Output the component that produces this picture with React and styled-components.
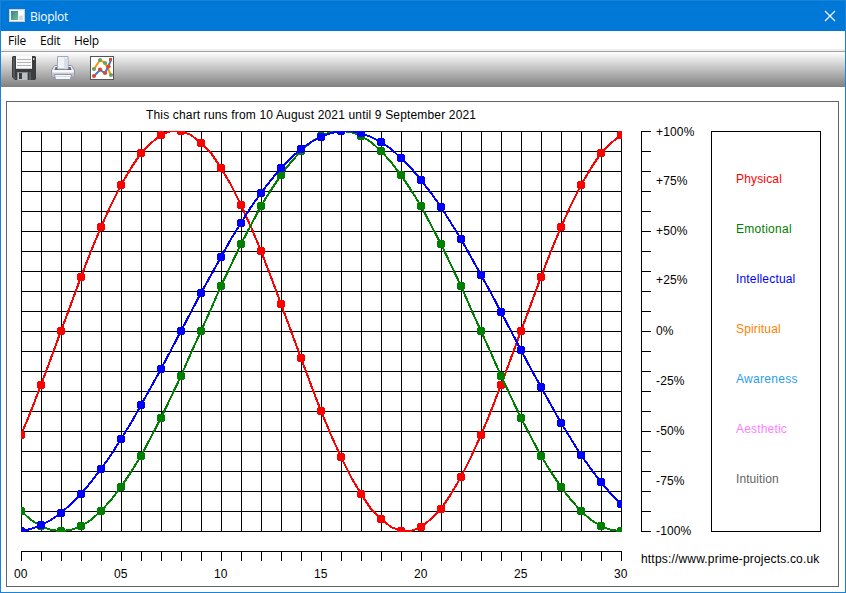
import React from "react";
import styled, { createGlobalStyle } from "styled-components";

const GlobalStyle = createGlobalStyle`
  body {
    margin: 0;
    background: #fff;
  }
`;

const Window = styled.div`
  box-sizing: border-box;
  display: flex;
  flex-direction: column;
  width: 846px;
  height: 593px;
  border: 1px solid #1883d7;
  background: #fff;
  overflow: hidden;
`;

const TitleBar = styled.header`
  display: flex;
  align-items: center;
  flex: none;
  height: 30px;
  padding: 0 9px 0 8px;
  background: #0078d7;
  color: #fff;
  font: 12px "Open Sans", "Noto Sans", sans-serif;
`;

const TitleText = styled.span`
  flex: 1;
  margin-left: 5px;
  letter-spacing: -0.25px;
`;

const CloseButton = styled.button`
  display: flex;
  padding: 0 0 1px;
  border: 0;
  background: none;
`;

const MenuBar = styled.nav`
  display: flex;
  box-sizing: border-box;
  flex: none;
  height: 20px;
  padding-left: 7px;
  border-bottom: 2px solid #f0f0f0;
  font: 12px/19px "Open Sans", "Noto Sans", sans-serif;
  color: #000;
`;

const MenuItem = styled.span`
  width: ${(props) => props.$width}px;
  letter-spacing: -0.25px;
`;

const ToolBar = styled.div`
  display: flex;
  box-sizing: border-box;
  flex: none;
  gap: 15px;
  height: 36px;
  padding: 4px 0 0 11px;
  border-top: 1px solid #a0a0a0;
  background: linear-gradient(#fff, #808080);
`;

const ToolButton = styled.button`
  display: flex;
  width: 24px;
  height: 24px;
  padding: 0;
  border: 0;
  background: none;
`;

const ChartFrame = styled.main`
  box-sizing: border-box;
  width: 833px;
  height: 486px;
  margin: 14px 0 0 5px;
  border: 1px solid #646464;
  font-family: "Liberation Sans", Arial, sans-serif;
  font-size: 12px;
  color: #000;
`;

const ChartTitle = styled.div`
  height: 29px;
  padding-left: 139px;
  line-height: 26px;
  letter-spacing: 0.16px;
  white-space: nowrap;
`;

const ChartBody = styled.div`
  display: flex;
`;

const Drawing = styled.svg`
  display: block;
  flex: none;
  overflow: visible;
  shape-rendering: crispEdges;
`;

const AxisLabel = styled.text`
  letter-spacing: 0.15px;
`;

const Side = styled.div`
  display: flex;
  flex-direction: column;
`;

const SideTop = styled.div`
  display: flex;
`;

const Legend = styled.div`
  box-sizing: border-box;
  width: 110px;
  height: 401px;
  padding: 22px 0 0 24px;
  border: 1px solid #000;
`;

const LegendItem = styled.div`
  height: 50px;
  line-height: 50px;
  color: ${(props) => props.$color};
  letter-spacing: ${(props) => props.$spacing || 0.17}px;
`;

const SiteUrl = styled.div`
  margin-top: 19px;
  line-height: 16px;
  white-space: nowrap;
  letter-spacing: 0.18px;
`;

const STEP = 20;
const DAYS = 30;
const LEFT = 14;

const cycles = [
  { color: "#ff0000", period: 23, offset: 2 },
  { color: "#008000", period: 28, offset: 9 },
  { color: "#0000ff", period: 33, offset: 8 },
];

const legend = [
  { name: "Physical", color: "#ff0000" },
  { name: "Emotional", color: "#008000", spacing: 0.28 },
  { name: "Intellectual", color: "#0000ff" },
  { name: "Spiritual", color: "#ff8000" },
  { name: "Awareness", color: "#2a9df4", spacing: 0.3 },
  { name: "Aesthetic", color: "#ff80ff" },
  { name: "Intuition", color: "#646464", spacing: 0.08 },
];

const percents = [
  ["+100%", 5],
  ["+75%", 54],
  ["+50%", 104],
  ["+25%", 153],
  ["0%", 204],
  ["-25%", 254],
  ["-50%", 304],
  ["-75%", 354],
  ["-100%", 404],
];

const range = (n) => Array.from({ length: n }, (_, i) => i);

const valueAt = (cycle, day) =>
  Math.round(
    200 - 200 * Math.sin((2 * Math.PI * (day - cycle.offset)) / cycle.period)
  );

const Curve = ({ cycle }) => (
  <g clipPath="url(#plot)">
    <polyline
      points={range(DAYS * 2 + 1)
        .map((i) => `${LEFT + i * 10},${valueAt(cycle, i / 2)}`)
        .join(" ")}
      fill="none"
      stroke={cycle.color}
      strokeWidth="2"
    />
    {range(DAYS + 1).map((day) => (
      <circle
        key={day}
        cx={LEFT + day * STEP}
        cy={valueAt(cycle, day)}
        r="4.4"
        fill={cycle.color}
      />
    ))}
  </g>
);

const Plot = () => (
  <Drawing width="634" height="450">
    <defs>
      <clipPath id="plot">
        <rect x={LEFT} y="0" width="601" height="401" />
      </clipPath>
    </defs>
    <g fill="#000">
      {range(DAYS + 1).map((i) => (
        <rect key={i} x={LEFT + i * STEP} y="0" width="1" height="401" />
      ))}
      {range(21).map((i) => (
        <rect key={i} x={LEFT} y={i * STEP} width="601" height="1" />
      ))}
      <rect x={LEFT} y="420" width="601" height="1" />
      {range(DAYS + 1).map((i) => (
        <rect key={i} x={LEFT + i * STEP} y="420" width="1" height="10" />
      ))}
    </g>
    {cycles.map((cycle) => (
      <Curve key={cycle.period} cycle={cycle} />
    ))}
    {range(7).map((i) => (
      <AxisLabel key={i} x={LEFT - 7 + i * 100} y="447">
        {String(i * 5).padStart(2, "0")}
      </AxisLabel>
    ))}
  </Drawing>
);

const PercentAxis = () => (
  <Drawing width="70" height="401">
    <rect width="1" height="401" />
    {range(21).map((i) => (
      <rect key={i} y={i * STEP} width="10" height="1" />
    ))}
    {percents.map(([label, y]) => (
      <AxisLabel key={label} x="15" y={y}>
        {label}
      </AxisLabel>
    ))}
  </Drawing>
);

const AppIcon = () => (
  <svg width="16" height="14" viewBox="0 0 16 14">
    <defs>
      <linearGradient id="screen" x1="0" y1="0" x2="1" y2="1">
        <stop offset="0" stopColor="#3c7c9c" />
        <stop offset="1" stopColor="#6fbf8b" />
      </linearGradient>
    </defs>
    <rect x="0.5" y="0.5" width="15" height="12" fill="#f2f2f2" stroke="#cfcfcf" />
    <rect x="2" y="2" width="7" height="9" fill="url(#screen)" />
    <rect x="10" y="2" width="4" height="4" fill="#fff" />
    <rect x="10" y="7" width="4" height="4" fill="#d5dbde" />
  </svg>
);

const SaveIcon = () => (
  <svg width="24" height="24" viewBox="0 0 24 24">
    <path d="M1 0h22l1 1v22l-1 1H3l-3-3V1z" fill="#3a3c3e" />
    <path d="M1 1h2v20l2 2H3l-2-2z" fill="#55585a" />
    <rect x="4" y="0" width="16" height="13" fill="#f9f9f9" />
    <path d="M5 3.5h14M5 6.5h14M5 9.5h14" stroke="#b4b4b4" />
    <rect x="4" y="12" width="16" height="1" fill="#d0d0d0" />
    <rect x="5" y="16" width="11" height="8" fill="#8b8e90" />
    <rect x="6" y="17" width="9" height="7" fill="#bcbfc0" />
    <rect x="7" y="17" width="3" height="6" fill="#3b3e40" />
    <rect x="17" y="16" width="2" height="8" fill="#56595b" />
    <rect x="21" y="2" width="1.5" height="2" fill="#c5c5c5" />
  </svg>
);

const PrintIcon = () => (
  <svg width="24" height="24" viewBox="0 0 24 24">
    <defs>
      <linearGradient id="body" x1="0" y1="0" x2="0" y2="1">
        <stop offset="0" stopColor="#f2f2f6" />
        <stop offset="1" stopColor="#b4b5c2" />
      </linearGradient>
    </defs>
    <path
      d="M3.5 9.5h17l3 4.500v5.500l-1.500 2H2l-1.500-2V14z"
      fill="url(#body)"
      stroke="#9496a6"
    />
    <path d="M4.500 11h15l1 3h-17z" fill="#696b7a" />
    <path d="M6.500.5h10.500v12.500H6.500z" fill="#eff3f8" stroke="#a0a9b6" />
    <path d="M13 1l3.500 3v9H13z" fill="#d6dee9" />
    <path d="M1.500 14h21v2.500h-21z" fill="#fafafc" />
    <path d="M3.500 18.500h17l-1 5h-15z" fill="#f4f7fb" stroke="#8f96a5" />
    <path d="M5 20.500h14" stroke="#d9dfe8" />
  </svg>
);

const PlotIcon = () => (
  <svg width="24" height="24" viewBox="0 0 24 24">
    <rect x="0.5" y="0.5" width="23" height="23" fill="#fff" stroke="#555" />
    <path d="M4 13L10 4l5 3 6 12" fill="none" stroke="#ff9300" strokeWidth="2" />
    <path d="M4 20l6-6 5 3 3.500-7 2.500-6" fill="none" stroke="#3c7fc0" strokeWidth="2" />
    <g fill="#6da35c">
      <circle cx="4" cy="13" r="2.1" />
      <circle cx="10" cy="4" r="2.1" />
      <circle cx="15" cy="7" r="2.1" />
      <circle cx="21" cy="19" r="2.1" />
    </g>
    <g fill="#dc4639">
      <circle cx="4" cy="20" r="2.1" />
      <circle cx="10" cy="13.5" r="2.1" />
      <circle cx="15" cy="17" r="2.1" />
      <circle cx="18.5" cy="10.5" r="2.1" />
      <rect x="19" y="2" width="3" height="3" />
    </g>
  </svg>
);

const App = () => {
  return (
    <Window>
      <GlobalStyle />
      <TitleBar>
        <AppIcon />
        <TitleText>Bioplot</TitleText>
        <CloseButton aria-label="Close">
          <svg width="12" height="12" viewBox="0 0 12 12">
            <path d="M1 1l10 10M11 1L1 11" stroke="#fff" strokeWidth="1.1" />
          </svg>
        </CloseButton>
      </TitleBar>
      <MenuBar>
        <MenuItem $width={32}>File</MenuItem>
        <MenuItem $width={34}>Edit</MenuItem>
        <MenuItem $width={34}>Help</MenuItem>
      </MenuBar>
      <ToolBar>
        <ToolButton aria-label="Save">
          <SaveIcon />
        </ToolButton>
        <ToolButton aria-label="Print">
          <PrintIcon />
        </ToolButton>
        <ToolButton aria-label="Plot">
          <PlotIcon />
        </ToolButton>
      </ToolBar>
      <ChartFrame>
        <ChartTitle>
          This chart runs from 10 August 2021 until 9 September 2021
        </ChartTitle>
        <ChartBody>
          <Plot />
          <Side>
            <SideTop>
              <PercentAxis />
              <Legend>
                {legend.map((item) => (
                  <LegendItem
                    key={item.name}
                    $color={item.color}
                    $spacing={item.spacing}
                  >
                    {item.name}
                  </LegendItem>
                ))}
              </Legend>
            </SideTop>
            <SiteUrl>https://www.prime-projects.co.uk</SiteUrl>
          </Side>
        </ChartBody>
      </ChartFrame>
    </Window>
  );
};

export default App;
